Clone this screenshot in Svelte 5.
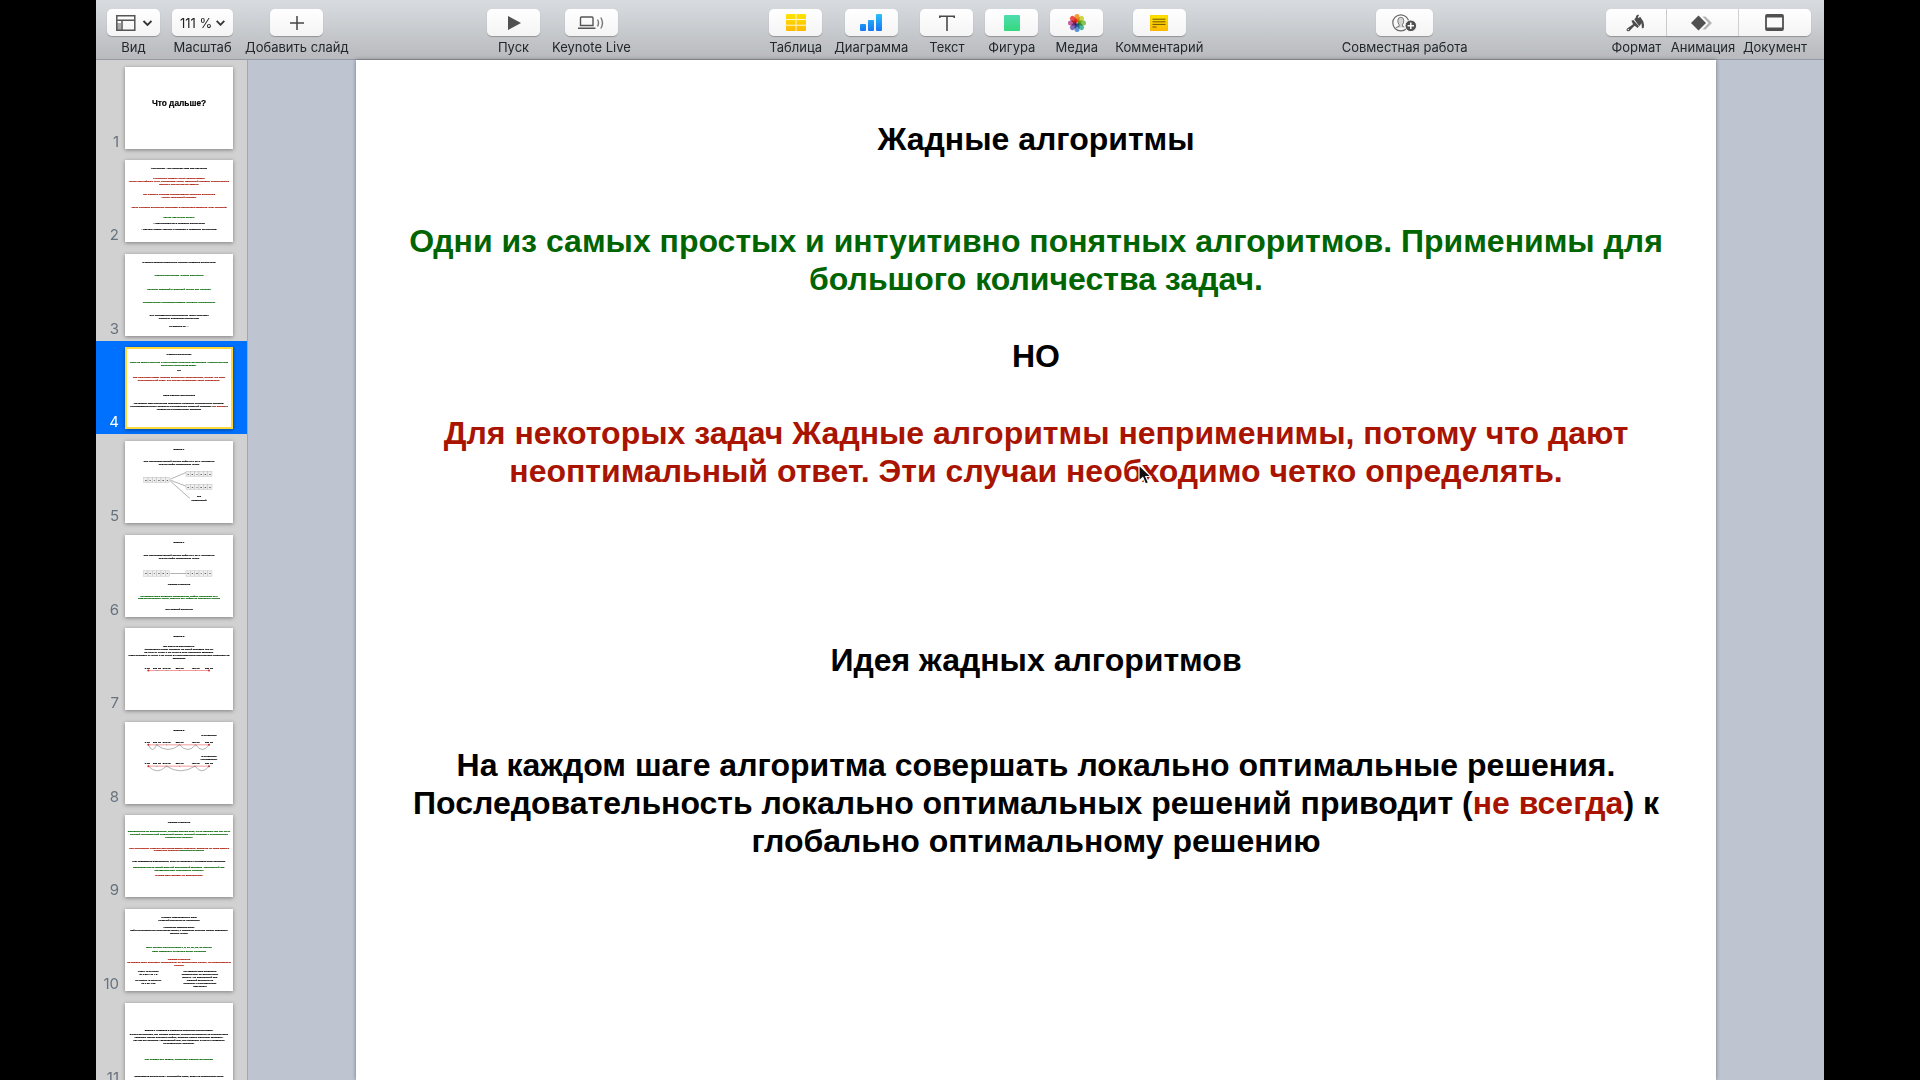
<script>
  const K = 'black', G = 'green', R = 'red';

  // Slide previews are drawn on a 324 x 245 grid; each line is [y, colour, text, x?]
  const task1 = [
    [61, K, 'Дан неупорядоченный список цифр от 0 до 9. Составить'],
    [70, K, 'из этих цифр наибольшее число']
  ];
  const stops = [67, 96, 125, 164, 212, 252];
  const stopNames = ['0 км', '200 км', '375 км', '550 км', '750 км', '950 км'];
  const stopRow = (y) => stops.map((x, i) => [y, K, stopNames[i], x]);

  const slides = [
    { big: true, lines: [[109, K, 'Что дальше?']] },
    {
      lines: [
        [23, K, 'Алгоритмы - это сложная тема для обучения'],
        [53, R, 'Алгоритмы решают очень разные задачи'],
        [62, R, '(поиск кратчайшего пути, сортировка чисел, машинный перевод, компьютерное'],
        [71, R, 'зрение и многие другие задачи)'],
        [101, R, 'Нет единого способа придумывания хорошего алгоритма'],
        [111, R, '(очень творческий процесс)'],
        [141, R, 'Часто хорошие алгоритмы возникают в результате озарения (Aha! moments)'],
        [171, G, 'Как же научиться этому?'],
        [190, K, '- Практиковаться в создании алгоритмов'],
        [208, K, '- Изучать общие техники и подходы к созданию алгоритмов']
      ]
    },
    {
      lines: [
        [24, K, '3 самые распространенные техники создания алгоритмов'],
        [64, G, 'Жадные алгоритмы (Greedy algorithms)'],
        [104, G, 'Принцип Разделяй и властвуй (Divide and Conquer)'],
        [144, G, 'Динамическое программирование (Dynamic Programming)'],
        [184, K, 'Эти стандартные инструменты часто помогают'],
        [193, K, 'ускорить «наивные» алгоритмы'],
        [215, K, 'Но важнее их …']
      ]
    },
    {
      lines: [
        [21, K, 'Жадные алгоритмы'],
        [44, G, 'Одни из самых простых и интуитивно понятных алгоритмов. Применимы для'],
        [54, G, 'большого количества задач.'],
        [70, K, 'НО'],
        [90, R, 'Для некоторых задач Жадные алгоритмы неприменимы, потому что дают'],
        [99, R, 'неоптимальный ответ. Эти случаи необходимо четко определять.'],
        [143, K, 'Идея жадных алгоритмов'],
        [168, K, 'На каждом шаге алгоритма совершать локально оптимальные решения.'],
        [177, K, 'Последовательность локально оптимальных решений приводит (', 0, 'не всегда', ') к'],
        [186, K, 'глобально оптимальному решению']
      ]
    },
    {
      lines: [[25, K, 'Задача 1'], ...task1, [166, K, '100', 222], [176, K, 'комбинаций', 222]],
      boxes: [[56, 108, '317989'], [183, 90, '137989'], [183, 129, '917389']],
      arrows: [[136, 114, 183, 94], [136, 117, 183, 135], [136, 120, 195, 172]]
    },
    {
      lines: [
        [21, K, 'Задача 1'],
        ...task1,
        [146, K, 'Жадная стратегия'],
        [182, G, 'На каждом шаге выберем наибольшую цифру, припишем ее к'],
        [190, G, 'результирующему числу, удалить эту цифру из исходного списка'],
        [222, K, 'Это жадный алгоритм']
      ],
      boxes: [[56, 107, '317989'], [183, 107, '998731']],
      arrows: [[136, 115, 183, 115]]
    },
    {
      lines: [
        [24, K, 'Задача 2'],
        [53, K, 'Вы едете на автомобиле.'],
        [63, K, 'Автомобиль может проехать на одной заправке 400 км.'],
        [72, K, 'На пути от точки А до точки В есть несколько заправок.'],
        [81, K, 'Надо проехать от точки А до точки В с минимальным количеством остановок на'],
        [90, K, 'заправках'],
        ...stopRow(119)
      ],
      routes: [[127, []]]
    },
    {
      lines: [
        [25, K, 'Задача 2'],
        [40, K, '3 остановки', 252],
        ...stopRow(59),
        [101, K, '2 остановки', 252],
        [110, K, '(оптимально)', 252],
        ...stopRow(124)
      ],
      routes: [[68, [70, 95, 164, 212, 252]], [132, [70, 124, 210, 252]]]
    },
    {
      lines: [
        [22, K, 'Жадная стратегия'],
        [48, G, 'Заправляться на бензоколонке, которая дальше всех, но не дальше чем 400 км от'],
        [57, G, 'текущей (оптимальный локальный выбор, который приведет к оптимальному'],
        [66, G, 'глобальному выбору)'],
        [98, R, 'При построении Жадного алгоритма важно подумать, является ли наше жадное'],
        [106, R, 'локальное решение ', 0, 'безопасным шагом!', '', G],
        [137, K, 'Шаг называется безопасным, если он приведет к оптимальному решению.'],
        [155, G, 'Заправляться на самой дальней достижимой заправке - безопасный шаг'],
        [164, G, '(доказательство некорректно сложное)'],
        [181, R, 'Иногда шаги бывают не безопасными']
      ]
    },
    {
      lines: [
        [23, K, 'Пример небезопасного шага'],
        [32, K, '(Жадный алгоритм не применим)'],
        [54, K, 'Проблема размена денег'],
        [63, K, 'Найти минимальное количество монет, с помощью которых можно разменять'],
        [73, K, 'данную сумму'],
        [114, G, 'Есть монеты достоинством 1, 5, 10, 20, 25, 50 центов'],
        [125, G, 'Надо разменять 40 центов этими монетами'],
        [149, R, 'Жадная стратегия'],
        [158, R, 'На каждом шаге выбирать наибольшую по достоинству монету, не превышающую'],
        [167, R, 'остаток'],
        [185, K, 'Ответ (3 монеты)', 70],
        [194, K, '40 = 25 + 10 + 5', 70],
        [213, K, 'Но можно (2 монеты)', 70],
        [221, K, '40 = 20 + 20', 70],
        [185, K, 'На каждом шаге выбирать', 225],
        [194, K, 'наибольшую по достоинству', 225],
        [203, K, 'монету - не безопасный ход.', 225],
        [213, K, 'Жадный алгоритм не', 225],
        [222, K, 'приводит к оптимальному', 225],
        [231, K, 'результату', 225]
      ]
    },
    {
      lines: [
        [82, K, 'Задача 1 и Задача 2 решаются похожими алгоритмами.'],
        [92, K, 'В этих алгоритмах, мы делаем решение, которое оптимально на текущем шаге'],
        [101, K, '(выбрать самую большую цифру, выбрать самую дальнюю заправку).'],
        [110, K, 'Так как это решение - безопасный шаг, оно приводит в итоге к глобально'],
        [120, K, 'оптимальному решению.'],
        [169, G, 'Мы решаем эти задачи, используя Жадные алгоритмы'],
        [218, K, 'Реализация алгоритмов - попробуйте сами, будет на следующем уроке']
      ]
    }
  ];

  let selected = $state(3);

  const petals = ['#f7941d', '#c9d62f', '#7cc04b', '#3fb59b', '#4a90d9', '#7b5fb5', '#c24d9b', '#ee3a36'];
  const arc = (a, b, y) => `M${a * 2} ${y * 2}Q${a + b} ${y * 2 + 56} ${b * 2} ${y * 2}`;
</script>

{#snippet tool(label, icon)}
  <button class="tool" type="button">
    <span class="face">{@render icon()}</span>
    <span class="caption">{label}</span>
  </button>
{/snippet}

{#snippet viewIcon()}
  <svg width="37" height="18" viewBox="0 0 37 18" fill="none" stroke="#555" stroke-width="1.5">
    <path d="M2 9h4v7H2z" fill="#aaa" stroke="none" />
    <path d="M1.8 1.8h18v14.4h-18zM1.8 6.2h18M7 6.2v10" />
    <path d="M28.5 7l4 4 4-4" stroke="#333" stroke-width="1.8" />
  </svg>
{/snippet}
{#snippet plusIcon()}
  <svg width="16" height="16" viewBox="0 0 16 16" stroke="#444" stroke-width="1.5"><path d="M8 1v14M1 8h14" /></svg>
{/snippet}
{#snippet playIcon()}
  <svg width="16" height="16" viewBox="0 0 16 16" fill="#505050"><path d="M2 1l13 7-13 7z" /></svg>
{/snippet}
{#snippet liveIcon()}
  <svg width="28" height="16" viewBox="0 0 28 16" fill="none" stroke="#555" stroke-width="1.4">
    <path d="M3.5 10.5V3q0-1 1-1H15q1 0 1 1v7.5zM1 13.2h17.5" />
    <path d="M20.5 4.5q2 3.5 0 7M23.8 2.5q3.4 5.5 0 11" stroke="#777" />
  </svg>
{/snippet}
{#snippet tableIcon()}
  <svg width="20" height="17" viewBox="0 0 20 17">
    <defs><linearGradient id="gy" x2="0" y2="1"><stop stop-color="#fee500" /><stop offset="1" stop-color="#fdb900" /></linearGradient></defs>
    <rect width="20" height="17" rx="1" fill="url(#gy)" />
    <path d="M10 0v17M0 5.5h20M0 11.2h20" stroke="#fff8d8" stroke-width="1" />
  </svg>
{/snippet}
{#snippet chartIcon()}
  <svg width="22" height="17" viewBox="0 0 22 17">
    <defs><linearGradient id="gb" gradientUnits="userSpaceOnUse" x2="0" y2="17"><stop stop-color="#2bc0fb" /><stop offset="1" stop-color="#1677f3" /></linearGradient></defs>
    <g fill="url(#gb)"><rect y="10" width="6" height="7" rx="1" /><rect x="8" y="6" width="6" height="11" rx="1" /><rect x="16" width="6" height="17" rx="1" /></g>
  </svg>
{/snippet}
{#snippet textIcon()}
  <svg width="16" height="16" viewBox="0 0 16 16" fill="none" stroke="#4a4a4a" stroke-width="1.6"><path d="M.8 3V1.3h14.4V3M8 1.3V16" /></svg>
{/snippet}
{#snippet shapeIcon()}
  <svg width="16" height="16" viewBox="0 0 16 16">
    <defs><linearGradient id="gg" x2="0" y2="1"><stop stop-color="#4fdcae" /><stop offset="1" stop-color="#33d97c" /></linearGradient></defs>
    <rect width="16" height="16" rx="1" fill="url(#gg)" />
  </svg>
{/snippet}
{#snippet mediaIcon()}
  <svg class="flower" width="18" height="18" viewBox="0 0 18 18">
    {#each petals as c, i}
      <rect x="6.5" y="0" width="5" height="8.5" rx="2.5" fill={c} transform="rotate({i * 45} 9 9)" />
    {/each}
  </svg>
{/snippet}
{#snippet commentIcon()}
  <svg width="18" height="16" viewBox="0 0 18 16">
    <rect width="18" height="16" rx="1" fill="url(#gy)" stroke="#eeb000" stroke-width=".5" />
    <path d="M2.5 4.2h13M2.5 6.8h13M2.5 9.4h13M2.5 12h4" stroke="#6d5200" />
  </svg>
{/snippet}
{#snippet shareIcon()}
  <svg width="25" height="18" viewBox="0 0 25 18" fill="none">
    <circle cx="8.8" cy="8.8" r="8" stroke="#666" stroke-width="1.2" />
    <path d="M3.5 14.5q.5-1.5 3.7-2.200v-1.500Q5.800 9 5.800 6.700 5.800 3.300 8.800 3.300t3 3.400q0 2.300-1.400 4.100v1.500l2 .8" fill="#d8d8d8" stroke="#777" />
    <circle cx="18.8" cy="11.8" r="5.8" fill="#505050" stroke="#fafafa" />
    <path d="M18.8 8.6V15M15.6 11.8H22" stroke="#fff" stroke-width="1.5" />
  </svg>
{/snippet}
{#snippet formatIcon()}
  <svg width="19" height="18" viewBox="0 0 19 18" fill="#4d4d4d">
    <path d="M8.2 5.3L9.7 3.8 10.2 1.8 12 .4 13 1.2 11.7 3.5 12.600 4 14.2 2.7 17.3 7.5Q18.3 10.5 17.8 13.5 16.8 15.2 15.8 13.6L15.6 9.3 13.2 12.2z" />
    <path d="M5.4 6.7L7.3 5.9 12.9 12.3 11.8 14 8.5 11.8 3.5 17Q1.3 18 .5 16.3.2 15 1.5 14.2L7.1 10.3z" />
    <circle cx="2.3" cy="15.6" r=".7" fill="#fff" />
  </svg>
{/snippet}
{#snippet animateIcon()}
  <svg width="22" height="16" viewBox="0 0 22 16">
    <path d="M11.5 1.5H14.5L21 8l-6.500 6.500H11.500L17.500 8z" fill="#b5b5b5" />
    <path d="M7.5.5L15 8l-7.500 7.500L0 8z" fill="#505050" />
  </svg>
{/snippet}
{#snippet documentIcon()}
  <svg width="19" height="17" viewBox="0 0 19 17">
    <rect x="1" y="1" width="17" height="15" rx="1" fill="#fafafa" stroke="#505050" stroke-width="1.8" />
    <path d="M1 1h17v2.500H1zM1 13.500h17V16H1z" fill="#505050" />
  </svg>
{/snippet}

<div class="app">
  <header class="toolbar">
    <div class="group">
      {@render tool('Вид', viewIcon)}
      <label class="tool">
        <span class="face zoom">
          <select><option>111 %</option></select>
          <svg width="9" height="6" viewBox="0 0 9 6" fill="none" stroke="#333" stroke-width="1.8"><path d="M.7.8l3.800 4 3.800-4" /></svg>
        </span>
        <span class="caption">Масштаб</span>
      </label>
      {@render tool('Добавить слайд', plusIcon)}
    </div>
    <div class="group">
      {@render tool('Пуск', playIcon)}
      {@render tool('Keynote Live', liveIcon)}
    </div>
    <div class="group">
      {@render tool('Таблица', tableIcon)}
      {@render tool('Диаграмма', chartIcon)}
      {@render tool('Текст', textIcon)}
      {@render tool('Фигура', shapeIcon)}
      {@render tool('Медиа', mediaIcon)}
      {@render tool('Комментарий', commentIcon)}
    </div>
    <div class="group share">{@render tool('Совместная работа', shareIcon)}</div>
    <div class="group segmented">
      {@render tool('Формат', formatIcon)}
      {@render tool('Анимация', animateIcon)}
      {@render tool('Документ', documentIcon)}
    </div>
  </header>

  <div class="body">
    <nav class="sidebar" aria-label="Слайды">
      {#each slides as s, n}
        <button type="button" class="item" class:selected={n === selected} onclick={() => (selected = n)}>
          <span class="number">{n + 1}</span>
          <svg class="thumb" class:big={s.big} viewBox="0 0 648 490" aria-hidden="true">
            {#each s.arrows ?? [] as [x1, y1, x2, y2]}
              <path class="arrow" d="M{x1 * 2} {y1 * 2}L{x2 * 2} {y2 * 2}" />
            {/each}
            {#each s.boxes ?? [] as [x, y, digits]}
              {#each digits.split('') as d, i}
                <rect class="cell" x={x * 2 + i * 26} y={y * 2} width="26" height="32" />
                <text class="digit" x={x * 2 + i * 26 + 13} y={y * 2 + 21}>{d}</text>
              {/each}
            {/each}
            {#each s.routes ?? [] as [y, hops]}
              <path class="road" d="M140 {y * 2}H506" />
              {#each stops as x, i}
                <circle class:end={i === 0 || i === 5} class="stop" cx={i === 0 ? 140 : x * 2} cy={y * 2} r={i === 0 || i === 5 ? 6 : 3} />
              {/each}
              {#each hops.slice(1) as h, i}
                <path class="hop" d={arc(hops[i], h, y)} />
              {/each}
            {/each}
            {#each s.lines as [y, c, t, x, accent, tail, accentColor]}
              <text class={c} x={(x || 162) * 2} y={y * 2 + (s.big ? 17 : 5)}>{t}{#if accent}<tspan class={accentColor ?? R}>{accent}</tspan>{tail}{/if}</text>
            {/each}
          </svg>
        </button>
      {/each}
    </nav>

    <main class="canvas">
      <article class="slide">
        <h1>Жадные алгоритмы</h1>
        <p class="green">Одни из самых простых и интуитивно понятных алгоритмов. Применимы для<br />большого количества задач.</p>
        <p class="but">НО</p>
        <p class="warning">Для некоторых задач Жадные алгоритмы неприменимы, потому что дают<br />неоптимальный ответ. Эти случаи необходимо четко определять.</p>
        <h2>Идея жадных алгоритмов</h2>
        <p>На каждом шаге алгоритма совершать локально оптимальные решения.<br />Последовательность локально оптимальных решений приводит (<span class="red">не всегда</span>) к<br />глобально оптимальному решению</p>
        <svg class="cursor" width="14" height="22" viewBox="0 0 14 22"><path d="M1 1v16l3.800-3.500L7.500 20l3-1.300L7.800 12.500H13z" fill="#111" stroke="#fff" stroke-width="1.2" /></svg>
      </article>
    </main>
  </div>
</div>

<style>
  :global(body) {
    margin: 0;
    background: #000;
  }
  .app {
    display: flex;
    flex-direction: column;
    width: 90%;
    height: 100vh;
    margin: 0 auto;
    overflow: hidden;
    font-family: Inter, 'Liberation Sans', sans-serif;
  }
  .toolbar {
    display: flex;
    flex: none;
    justify-content: space-between;
    box-sizing: border-box;
    height: 60px;
    padding: 9px 13px 0 11px;
    background: linear-gradient(#d8dce0, #b8babd);
    border-bottom: 1px solid #949ba4;
  }
  .group {
    display: flex;
    gap: 12px;
  }
  button {
    padding: 0;
    border: 0;
    background: none;
    font: inherit;
  }
  .tool {
    display: flex;
    flex-direction: column;
    align-items: center;
    justify-content: flex-start;
    gap: 3px;
  }
  .face {
    display: flex;
    align-items: center;
    justify-content: center;
    width: 53px;
    height: 27px;
    border-radius: 5px;
    background: linear-gradient(#fff, #f4f4f4);
    box-shadow: 0 1px 1px #0004;
  }
  .share .face {
    width: 57px;
  }
  .zoom {
    gap: 3px;
    width: 61px;
  }
  select {
    appearance: none;
    padding: 0;
    border: 0;
    background: none;
    color: #222;
    font: 13px Inter, sans-serif;
  }
  .caption {
    color: #23272b;
    font-size: 13px;
    line-height: 16px;
    white-space: nowrap;
  }
  .segmented {
    gap: 0;
  }
  .segmented .tool {
    width: 72px;
  }
  .segmented .tool:first-child {
    width: 61px;
  }
  .segmented .face {
    box-sizing: border-box;
    width: 100%;
    border-radius: 0;
    border-right: 1px solid #d5d5d5;
  }
  .segmented .tool:first-child .face {
    border-radius: 5px 0 0 5px;
  }
  .segmented .tool:last-child .face {
    border-right: 0;
    border-radius: 0 5px 5px 0;
  }
  .flower rect {
    mix-blend-mode: multiply;
    opacity: 0.9;
  }
  .body {
    display: flex;
    flex: 1;
    min-height: 0;
  }
  .sidebar {
    flex: none;
    box-sizing: border-box;
    width: 152px;
    overflow: hidden;
    background: #d1d1d1;
    border-right: 1px solid #a3a8b0;
  }
  .item {
    display: flex;
    align-items: flex-end;
    gap: 6px;
    box-sizing: border-box;
    width: 100%;
    aspect-ratio: 50 / 31;
    padding: 5px 14px 5px 0;
  }
  .selected {
    background: #0071fe;
  }
  .number {
    flex: 1;
    color: #67727f;
    font-size: 15px;
    line-height: 14px;
    text-align: right;
  }
  .selected .number {
    color: #fff;
  }
  .thumb {
    flex: none;
    width: 108px;
    height: 82px;
    background: #fff;
    box-shadow: 0 1px 4px #0006;
    font: bold 15px 'Liberation Sans', sans-serif;
    text-anchor: middle;
  }
  .thumb text {
    stroke: currentColor;
    stroke-width: 1;
  }
  .thumb .black {
    color: #000;
  }
  .thumb tspan {
    stroke: currentColor;
  }
  .big {
    font-size: 50px;
  }
  .selected .thumb {
    outline: 2px solid #fdd93a;
    outline-offset: -2px;
  }
  .green {
    color: #006400;
    fill: #006400;
  }
  .red,
  .warning {
    color: #a81400;
    fill: #a81400;
  }
  .cell {
    fill: #eee;
    stroke: #aaa;
    stroke-width: 2;
  }
  .thumb .digit {
    color: #555;
    fill: #555;
  }
  .arrow,
  .hop {
    fill: none;
    stroke: #666;
    stroke-width: 3;
  }
  .road {
    stroke: #e66;
    stroke-width: 4;
  }
  .stop {
    fill: #789;
  }
  .end {
    fill: #d22;
  }
  .canvas {
    display: flex;
    flex: 1;
    min-width: 0;
    padding: 0 108px;
    background: #bec5d1;
  }
  .slide {
    position: relative;
    flex: 1;
    min-width: 0;
    padding-top: 60px;
    background: #fff;
    box-shadow: 0 0 4px #0006;
    font: bold 32px / 38px 'Liberation Sans', Arial, sans-serif;
    text-align: center;
    white-space: nowrap;
  }
  .slide h1,
  .slide h2,
  .slide p {
    margin: 0;
    font: inherit;
  }
  .slide h1 {
    margin-bottom: 64px;
  }
  .slide .green,
  .slide .but {
    margin-bottom: 39px;
  }
  .slide .warning {
    margin-bottom: 151px;
  }
  .slide h2 {
    margin-bottom: 67px;
  }
  .cursor {
    position: absolute;
    top: 404px;
    left: 782px;
  }
</style>
